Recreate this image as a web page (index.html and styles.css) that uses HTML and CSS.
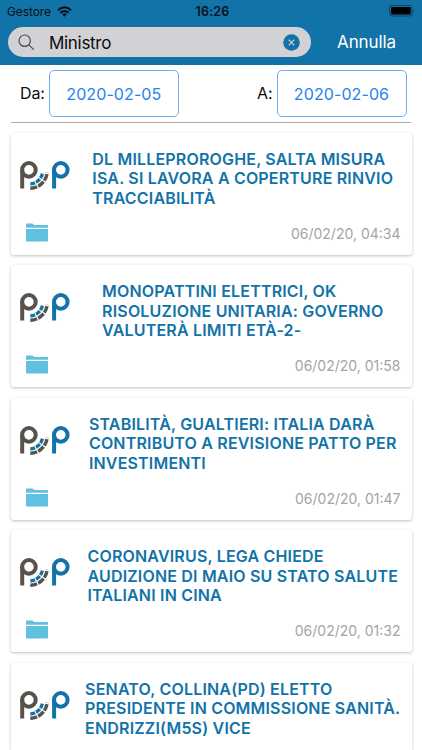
FILE: index.html
```
<!DOCTYPE html>
<html lang="it">
<head>
<meta charset="utf-8">
<title>Ricerca</title>
<link rel="stylesheet" href="styles.css">
</head>
<body>
<svg class="defs" width="0" height="0" aria-hidden="true">
  <symbol id="logo" viewBox="0 0 50 30">
    <g fill="none" stroke-width="4">
      <g stroke="#57534c"><circle cx="8.900" cy="8.900" r="6.800"/><path d="M2.200 9v18.500"/><path d="M10.300 27.200A17.300 17.300 0 0 0 27.200 11.800" stroke-width="3.400" stroke-dasharray="7 1.200"/></g>
      <g stroke="#1273a8"><circle cx="40.800" cy="8.900" r="6.800"/><path d="M34.100 9v18.500"/><path d="M10.300 22.800A12.800 12.800 0 0 0 22.500 11.800" stroke-width="3.300" stroke-dasharray="4.900 1.100"/></g>
    </g>
  </symbol>
  <symbol id="folder" viewBox="0 0 22 19"><path fill="#60c0df" d="M0 4.800V1.500Q0 .5 1 .5h5.500l1.600 1.500H21q1 0 1 1v1.800zM0 5.900h22V17.500q0 1-1 1H1q-1 0-1-1z"/></symbol>
</svg>
<header class="top">
  <div class="status">
    <div class="carrier"><span>Gestore</span>
      <svg width="15" height="11" viewBox="0 0 15 11"><g fill="none" stroke="#071018" stroke-width="1.900"><path d="M.9 4.200Q7.500-1.900 14.100 4.200"/><path d="M3.300 6.800Q7.500 3.100 11.700 6.800"/></g><path fill="#071018" d="M5.200 8.300Q7.500 6.400 9.800 8.300L7.500 10.700z"/></svg>
    </div>
    <span class="clock">16:26</span>
    <svg class="battery" width="27" height="12" viewBox="0 0 27 12"><rect x=".5" y=".5" width="22.500" height="10.500" rx="2.500" fill="none" stroke="#0c405e"/><rect x="2" y="2" width="19.700" height="7.500" rx="1.200"/><path fill="#0c405e" d="M24.300 3.900q1.600 1.900 0 3.800z"/></svg>
  </div>
  <div class="searchrow">
    <div class="search">
      <svg width="17" height="17" viewBox="0 0 17 17" fill="none" stroke="#4b4b50" stroke-width="1.200"><circle cx="6.700" cy="6.700" r="5.700"/><path d="M10.900 10.900l4.800 4.800"/></svg>
      <span class="query">Ministro</span>
      <svg class="clear" width="17" height="17" viewBox="0 0 17 17"><circle cx="8.500" cy="8.500" r="8.300" fill="#1273a8"/><path d="M5.700 5.700l5.600 5.600m0-5.600l-5.600 5.600" stroke="#d1d1d6" stroke-width="1.200"/></svg>
    </div>
    <span class="cancel">Annulla</span>
  </div>
</header>
<main>
  <div class="dates">
    <span class="label">Da:</span><span class="date">2020-02-05</span>
    <span class="label to">A:</span><span class="date">2020-02-06</span>
  </div>
  <article class="card">
    <svg class="logo"><use href="#logo"/></svg>
    <h2><span>DL MILLEPROROGHE, SALTA MISURA</span><span>ISA. SI LAVORA A COPERTURE RINVIO</span><span>TRACCIABILITÀ</span></h2>
    <svg class="folder"><use href="#folder"/></svg><time>06/02/20, 04:34</time>
  </article>
  <article class="card">
    <svg class="logo"><use href="#logo"/></svg>
    <h2><span>MONOPATTINI ELETTRICI, OK</span><span>RISOLUZIONE UNITARIA: GOVERNO</span><span>VALUTERÀ LIMITI ETÀ-2-</span></h2>
    <svg class="folder"><use href="#folder"/></svg><time>06/02/20, 01:58</time>
  </article>
  <article class="card">
    <svg class="logo"><use href="#logo"/></svg>
    <h2><span>STABILITÀ, GUALTIERI: ITALIA DARÀ</span><span>CONTRIBUTO A REVISIONE PATTO PER</span><span>INVESTIMENTI</span></h2>
    <svg class="folder"><use href="#folder"/></svg><time>06/02/20, 01:47</time>
  </article>
  <article class="card">
    <svg class="logo"><use href="#logo"/></svg>
    <h2><span>CORONAVIRUS, LEGA CHIEDE</span><span>AUDIZIONE DI MAIO SU STATO SALUTE</span><span>ITALIANI IN CINA</span></h2>
    <svg class="folder"><use href="#folder"/></svg><time>06/02/20, 01:32</time>
  </article>
  <article class="card last">
    <svg class="logo"><use href="#logo"/></svg>
    <h2><span>SENATO, COLLINA(PD) ELETTO</span><span>PRESIDENTE IN COMMISSIONE SANITÀ.</span><span>ENDRIZZI(M5S) VICE</span></h2>
  </article>
</main>
</body>
</html>
```
FILE: styles.css
```
* { box-sizing: border-box; }
body { margin: 0; height: 750px; overflow: hidden; background: #fff; font-family: Inter, "Liberation Sans", sans-serif; color: #0c0c0c; }
svg { display: block; flex: none; }
.defs { display: none; }
.top { height: 65px; background: #1273a8; }
.status { height: 22px; display: grid; grid-template-columns: 1fr auto 1fr; align-items: center; padding: 0 6px 0 7px; font-size: 12px; color: #071018; }
.carrier { display: flex; align-items: center; gap: 6px; letter-spacing: -.1px; }
.clock { font-weight: 600; font-size: 12.500px; letter-spacing: .2px; padding-left: 2px; }
.battery { justify-self: end; }
.searchrow { display: flex; align-items: center; padding: 5px 0 0 8px; }
.search { width: 303px; height: 30px; border-radius: 15px; background: #d1d1d6; display: flex; align-items: center; padding: 0 11px 0 10px; }
.query { margin-left: 14px; padding-top: 1px; font-size: 17px; letter-spacing: -.3px; }
.clear { margin-left: auto; }
.cancel { margin-left: 26px; font-size: 17px; color: #fff; letter-spacing: -.1px; }
.dates { height: 57.500px; margin: 0 11px 10px; border-bottom: 1.500px solid #aaa; display: flex; align-items: flex-start; padding: 5px 4.500px 0 9px; font-size: 16px; }
.label { line-height: 46px; margin-right: 4px; letter-spacing: -.1px; }
.to { margin-left: auto; }
.date { width: 130px; height: 47px; border: 1px solid #6aaef8; border-radius: 5px; color: #2583ee; line-height: 46px; text-align: center; letter-spacing: .1px; }
.card { width: 401px; height: 122px; margin: 0 0 10.500px 10.500px; border-radius: 3px; background: #fff; box-shadow: 0 1px 3px rgba(0,0,0,.25); display: grid; grid-template-columns: 50px 1fr; grid-template-rows: 90px 21px; padding: 0 11px 0 9.500px; }
.last { height: 87.500px; margin-bottom: 0; border-radius: 3px 3px 0 0; }
.logo { width: 50px; height: 30px; margin-top: 28px; }
h2 { margin: 17px 0 0; justify-self: center; position: relative; left: 7.500px; font-size: 16px; font-weight: 600; line-height: 19.500px; letter-spacing: .18px; color: #1273a8; white-space: nowrap; }
h2 span { display: block; }
.folder { width: 22px; height: 19px; margin: 0 0 0 6px; }
time { justify-self: end; font-size: 14px; line-height: 22px; color: #a4a4a4; }
```
